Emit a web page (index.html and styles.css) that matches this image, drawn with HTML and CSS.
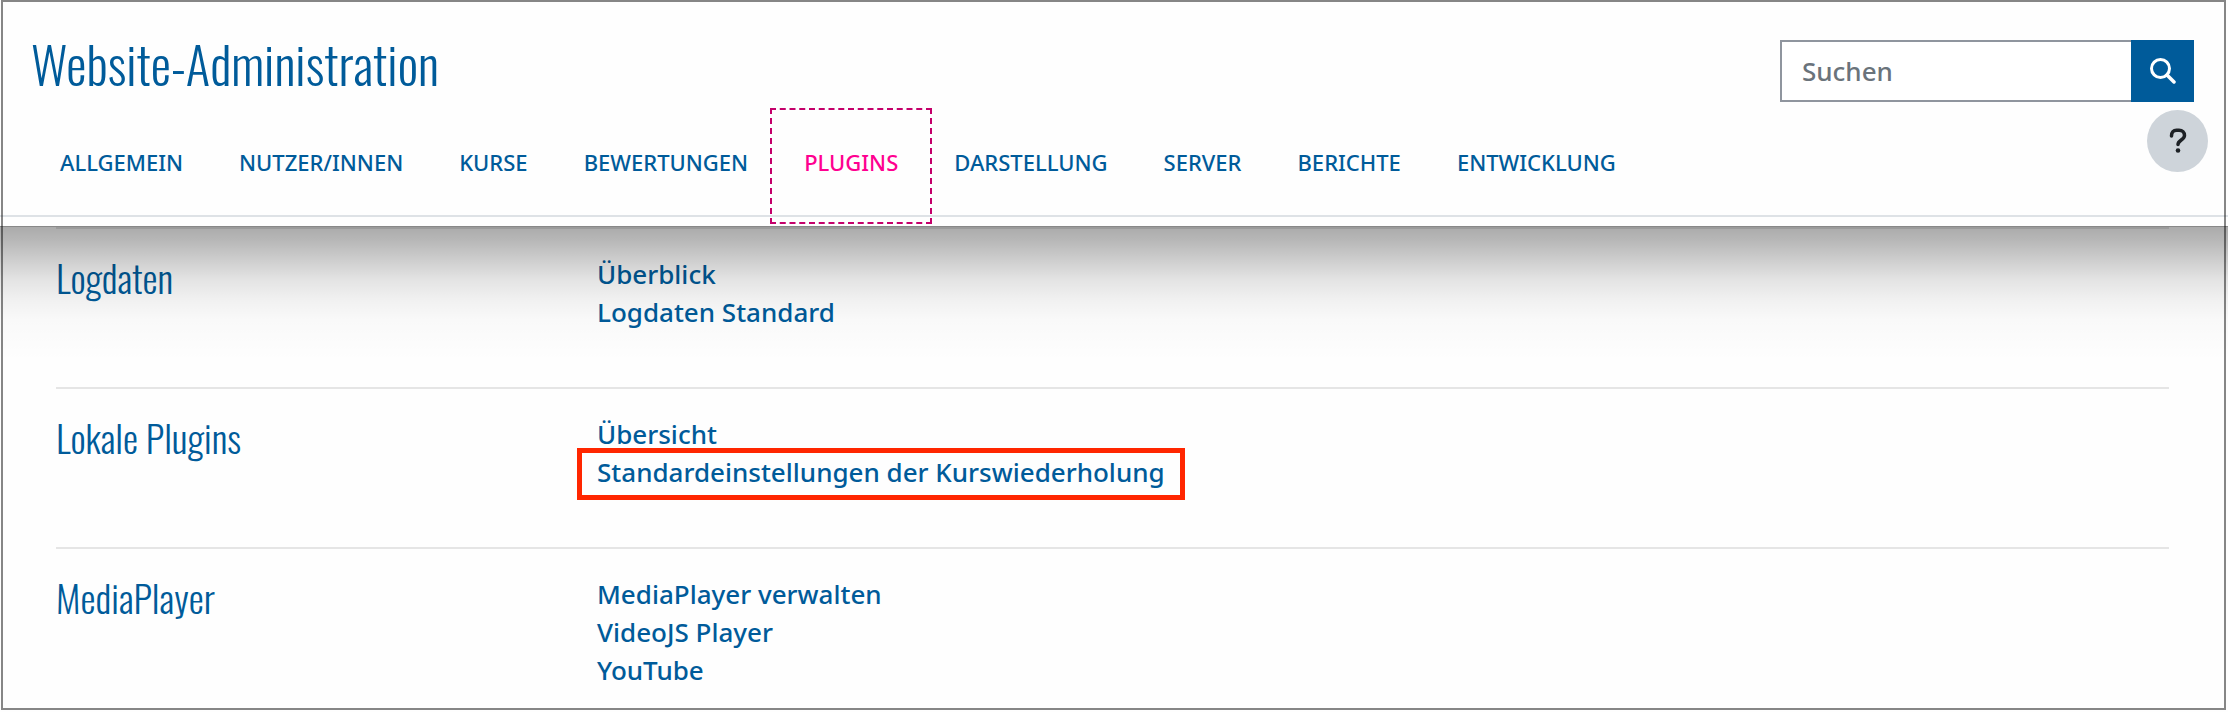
FILE: index.html
```
<!DOCTYPE html>
<html lang="de">
<head>
    <meta charset="UTF-8">
    <meta name="viewport" content="width=device-width, initial-scale=1.0">
    <title>Website-Administration</title>
    <link rel="stylesheet" href="styles.css">
</head>
<body>
    <div class="page">
        <header class="header">
            <div class="header-top">
                <h1>Website-Administration</h1>
                <form class="search" role="search">
                    <input type="text" class="search-input" placeholder="Suchen" aria-label="Suchen">
                    <button type="submit" class="search-button" aria-label="Suchen">
                        <svg width="26" height="26" viewBox="0 0 26 26" fill="none" stroke="#fff" stroke-width="3" stroke-linecap="round">
                            <circle cx="10.500" cy="10.500" r="9"/>
                            <path d="M17 17l7 7" stroke-width="3.500"/>
                        </svg>
                    </button>
                </form>
            </div>
            <nav class="tabs">
                <a href="#allgemein">ALLGEMEIN</a>
                <a href="#nutzer">NUTZER/INNEN</a>
                <a href="#kurse">KURSE</a>
                <a href="#bewertungen">BEWERTUNGEN</a>
                <a href="#plugins" class="active">PLUGINS</a>
                <a href="#darstellung">DARSTELLUNG</a>
                <a href="#server">SERVER</a>
                <a href="#berichte">BERICHTE</a>
                <a href="#entwicklung">ENTWICKLUNG</a>
            </nav>
            <button type="button" class="help" aria-label="Hilfe">
                <svg width="18" height="26" viewBox="0 0 18 26" fill="none" stroke="#1d2125" stroke-width="3.500" stroke-linecap="round" stroke-linejoin="round">
                    <path d="M2.500 8C2.500 4 4.500 2.300 7.500 2.300H10C13.500 2.300 15.500 4.500 15.500 7.500C15.500 12 9 12 9 16.500"/>
                    <circle cx="9" cy="22.500" r="2.300" fill="#1d2125" stroke="none"/>
                </svg>
            </button>
        </header>
        <main class="content">
            <section class="row">
                <h2><a href="#logdaten">Logdaten</a></h2>
                <ul>
                    <li><a href="#log-ueberblick">Überblick</a></li>
                    <li><a href="#log-standard">Logdaten Standard</a></li>
                </ul>
            </section>
            <section class="row">
                <h2><a href="#lokale">Lokale Plugins</a></h2>
                <ul>
                    <li><a href="#lokale-uebersicht">Übersicht</a></li>
                    <li><a href="#kurswiederholung" class="marked">Standardeinstellungen der Kurswiederholung</a></li>
                </ul>
            </section>
            <section class="row">
                <h2><a href="#mediaplayer">MediaPlayer</a></h2>
                <ul>
                    <li><a href="#media-verwalten">MediaPlayer verwalten</a></li>
                    <li><a href="#videojs">VideoJS Player</a></li>
                    <li><a href="#youtube">YouTube</a></li>
                </ul>
            </section>
        </main>
    </div>
</body>
</html>
```

FILE: styles.css
```
* {
    box-sizing: border-box;
}
body {
    margin: 0;
    font-family: "Noto Sans", "Open Sans", sans-serif;
    font-size: 26px;
    font-weight: 500;
    line-height: 38px;
    color: #1d2125;
    background-color: #fefefe;
}
a {
    color: #005b9a;
    text-decoration: none;
}
.page {
    position: relative;
}
/* thin frame around the whole page */
.page::after {
    content: "";
    position: absolute;
    inset: 0 2px 2px 1px;
    border: 2px solid rgba(0, 0, 0, 0.47);
    pointer-events: none;
}
h1, h2 {
    margin: 0;
    font-family: Oswald, "Roboto Condensed", Roboto, sans-serif;
    font-weight: 300;
    color: #005b9a;
}

/* header */
.header {
    position: relative;
    padding-bottom: 9px;
    border-bottom: 1px solid #888;
}
/* shadow that falls on the content below */
.header::after {
    content: "";
    position: absolute;
    top: 100%;
    left: 0;
    right: 0;
    height: 134px;
    margin-top: 1px;
    background: linear-gradient(rgba(0, 0, 0, 0.33), rgba(0, 0, 0, 0.28) 10%, rgba(0, 0, 0, 0.19) 25%, rgba(0, 0, 0, 0.1) 40%, rgba(0, 0, 0, 0.05) 55%, rgba(0, 0, 0, 0.02) 70%, transparent);
    pointer-events: none;
}
.header-top {
    display: flex;
    justify-content: space-between;
    padding: 40px 34px 8px 31px;
}
h1 {
    font-size: 51px;
    line-height: 46px;
}
.search {
    display: flex;
    width: 414px;
    height: 62px;
}
.search-input {
    flex: 1;
    min-width: 0;
    padding: 0 20px;
    border: 2px solid #8f959e;
    border-right: 0;
    border-radius: 0;
    font: inherit;
    background-color: #fff;
}
.search-input::placeholder {
    color: #6a737b;
    opacity: 1;
}
.search-button {
    display: flex;
    align-items: center;
    justify-content: center;
    width: 63px;
    padding: 0;
    border: 0;
    background-color: #005b9a;
}
.tabs {
    display: flex;
    padding: 0 32px;
    border-bottom: 2px solid #dee2e6;
}
.tabs a {
    position: relative;
    padding: 35px 28px 36px;
    font-size: 22px;
    line-height: 34px;
}
.tabs .active {
    color: #ff0090;
}
.tabs .active::after {
    content: "";
    position: absolute;
    inset: -2px -6px -9px;
    border: 2px dashed #c4006a;
}
.help {
    position: absolute;
    top: 110px;
    right: 20px;
    display: flex;
    align-items: center;
    justify-content: center;
    width: 61px;
    height: 62px;
    padding: 0;
    border: 0;
    border-radius: 50%;
    background-color: #ced4da;
}

/* plugin categories */
.content {
    padding: 0 59px 0 56px;
}
.row {
    display: grid;
    grid-template-columns: 541px 1fr;
    padding: 26px 0 56px;
    border-top: 2px solid #e5e5e5;
}
.row:last-child {
    padding-bottom: 23px;
}
h2 {
    font-size: 38px;
    line-height: 44px;
}
ul {
    margin: 0;
    padding: 0;
    list-style: none;
}
.marked {
    position: relative;
    display: inline-block;
}
.marked::after {
    content: "";
    position: absolute;
    inset: -5px -20px -9px;
    border: 5px solid #ff2600;
}
```
